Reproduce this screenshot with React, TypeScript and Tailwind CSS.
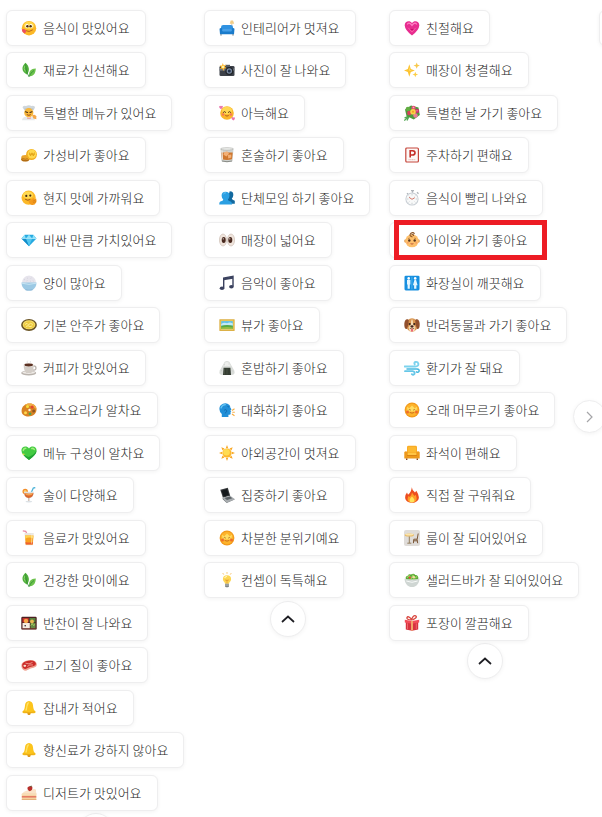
import React from 'react';

const icons: Record<string, React.ReactNode> = {
  yum: (
    <>
      <circle cx="8" cy="8.2" r="7.2" fill="#fcb827" />
      <ellipse cx="8" cy="5.5" rx="5.2" ry="3.8" fill="#ffd84c" />
      <ellipse cx="6" cy="6" rx="1.7" ry="2.1" fill="#fff" />
      <ellipse cx="10" cy="6" rx="1.7" ry="2.1" fill="#fff" />
      <circle cx="6.4" cy="6.2" r="1.2" fill="#4a2b12" />
      <circle cx="9.6" cy="6.2" r="1.2" fill="#4a2b12" />
      <path d="M5 10.800q3 2 6.500-.8" fill="none" stroke="#a8521b" strokeWidth=".8" strokeLinecap="round" />
      <path d="M.8 9.500q2-1.300 4 .7.600 3-1.500 3Q1.100 12.600.8 9.500z" fill="#ee4f5e" />
    </>
  ),
  herb: (
    <>
      <path d="M4.500.8C.3 4.500.2 9.600 5.900 12.600 9.300 8.400 8 3.700 4.500.8z" fill="#4fae3b" />
      <path d="M14.800 6.500c-4.600-.1-7.600 3-6.400 7.600 4.300.5 6.300-3 6.400-7.600z" fill="#6cc24c" />
      <path d="M4.600 2.500c.2 4.600 1.200 8.500 3.600 12.500M13 8.500c-2.200 1.500-3.700 3.300-4.700 6" fill="none" stroke="#2f8a33" strokeWidth=".8" />
      <path d="M3.800 3.800Q2.300 6.800 4.300 9.500" fill="none" stroke="#8ed66d" strokeWidth=".9" />
    </>
  ),
  chef: (
    <>
      <path d="M1.500 2.300Q2 .2 5 .9 8-.6 10.500.9q3.500-.6 3.500 1.700L12.500 5.500H3.500z" fill="#cfd6db" />
      <path d="M3.500 4h8.800" stroke="#aeb9c0" strokeWidth=".8" />
      <circle cx="7.800" cy="7.700" r="4.600" fill="#f8b83a" />
      <path d="M4.500 6.700l2 .8M11 6.700l-2 .8" stroke="#47301c" strokeWidth="1.100" strokeLinecap="round" />
      <path d="M5.800 9.600q2 1.500 4 0" fill="none" stroke="#8f3d18" strokeWidth=".9" />
      <path d="M1 15.300q.4-3.500 4-3.500l3 1.500 3-1.500q2.500.4 3 3.500z" fill="#e5e9eb" />
      <path d="M6.500 12.200l1.500.8 1.500-.8v1.600L8 13.200l-1.500.6z" fill="#e1584c" />
      <path d="M11 10.500q2.700-1.600 4.200.8l.2 3-3-.8z" fill="#f3a74a" />
    </>
  ),
  coins: (
    <>
      <ellipse cx="4.200" cy="12.300" rx="4.100" ry="2.300" fill="#c17b18" />
      <ellipse cx="4.400" cy="10.400" rx="4.100" ry="2.300" fill="#eaa52d" />
      <path d="M1 11.200q3.200 2 6.700 0M1 13q3.200 1.500 6.500.2" fill="none" stroke="#a35f10" strokeWidth=".6" />
      <ellipse cx="10.500" cy="7.500" rx="5.400" ry="5.600" fill="#f2ae20" />
      <ellipse cx="10.900" cy="7" rx="4.300" ry="4.500" fill="#ffd84d" />
      <path d="M8.300 5.500l1.200 3.500L11 5.800 12.300 9l1.200-3.500M8 7.200h6" fill="none" stroke="#dfa014" strokeWidth=".8" />
    </>
  ),
  handface: (
    <>
      <circle cx="7.600" cy="7.700" r="7.100" fill="#fcb928" />
      <ellipse cx="7" cy="5" rx="5" ry="3.600" fill="#ffda52" />
      <circle cx="5.300" cy="5.900" r="1.100" fill="#432a15" />
      <circle cx="9.300" cy="5.600" r="1.100" fill="#432a15" />
      <path d="M4.500 9.500q2.200 1.500 4.500.2" fill="none" stroke="#823c13" strokeWidth=".8" strokeLinecap="round" />
      <path d="M7.500 11.500l4.600-3.200q1.400-.4.900 1l2-.8q.8.300.2 1.200.8.500.1 1.300.6.800-.2 1.500-1.400 3-4.400 2.400-2.300-.4-3.200-3.400z" fill="#f49a1d" />
      <path d="M11.800 11.200l3-1.300M12.200 12.600l2.800-1.100" stroke="#cb7611" strokeWidth=".6" />
    </>
  ),
  gem: (
    <>
      <path d="M3.700 2.800h8.600L15.500 6.500 8 14.200.5 6.500z" fill="#26a9e0" />
      <path d="M3.700 2.800L.5 6.500h4.300zM8 2.800L4.800 6.500h6.400zM12.300 2.800l-1.100 3.700h4.300z" fill="#8be1fa" />
      <path d="M4.800 6.500L8 14.200l3.200-7.700z" fill="#52c6ef" />
      <path d="M.5 6.500L8 14.200 4.800 6.500z" fill="#138cc9" />
      <path d="M1 6.500h14" stroke="#d4f7ff" strokeWidth=".6" />
    </>
  ),
  rice: (
    <>
      <path d="M1 8Q1 1.500 8 .5 15 1.500 15 8z" fill="#e6e4ec" />
      <path d="M3 5l1-.8M6 3l1 .4M9.500 3.500l1-.7M12 5.500l.5 1M5.500 6l1-.5M9 6l1 .4" stroke="#d0cfd9" strokeWidth=".7" />
      <path d="M.5 7.500h15q0 5-4 7.500-3.500 1.100-7 0-4-2.500-4-7.500z" fill="#9cc9e4" />
      <path d="M.8 8.200q7.200 2.300 14.400 0" fill="none" stroke="#c7e4f2" strokeWidth="1" />
      <path d="M4.500 14q3.500 1.300 7 0v1.200q-3.500.8-7 0z" fill="#8bb7d6" />
    </>
  ),
  dish: (
    <>
      <ellipse cx="8" cy="8" rx="7.900" ry="6" fill="#6b5526" />
      <ellipse cx="8" cy="7.700" rx="6.300" ry="4.500" fill="#f8e16d" />
      <ellipse cx="8" cy="8" rx="5.500" ry="3.700" fill="#ecc940" />
      <path d="M4 7.500l2-1.200 1.500 1.500 2-1.500 2.500 1.200M5 9.500l2-.8 2 1 2.300-.8" fill="none" stroke="#fff19c" strokeWidth=".9" />
    </>
  ),
  coffee: (
    <>
      <ellipse cx="7.700" cy="13" rx="7.500" ry="2.400" fill="#b9b3ad" />
      <ellipse cx="7.700" cy="12.500" rx="6.300" ry="1.500" fill="#eeeae6" />
      <circle cx="12.800" cy="8" r="2.200" fill="none" stroke="#b7b0aa" strokeWidth="1.200" />
      <path d="M2.700 4.800h10q0 6-2.500 8.200H5.200q-2.500-2.200-2.500-8.200z" fill="#d3cdc7" />
      <ellipse cx="7.700" cy="4.900" rx="5" ry="1.800" fill="#f1ece8" />
      <ellipse cx="7.700" cy="5" rx="4.300" ry="1.400" fill="#5b3021" />
      <path d="M6.500 3q-1-1 .3-2.300M9.500 3q-1-1 .3-2" fill="none" stroke="#d8d8d8" strokeWidth=".7" />
    </>
  ),
  palette: (
    <>
      <path d="M8.500 1.500c4.500 0 7.200 2.700 7 6.200-.2 4.200-3.800 6.700-8 6.700C3 14.400.3 12 .6 8.400.8 7 .9 5 3.400 3.300 4.500 2 6.500 1.500 8.500 1.500z" fill="#d98323" />
      <path d="M8.500 1.500c4.500 0 7.200 2.700 7 6.200C13.500 4.500 8.500 3.500 3.400 3.300 4.500 2 6.500 1.500 8.500 1.500z" fill="#f0ae45" />
      <circle cx="6.500" cy="4.500" r="1.500" fill="#f8df3c" />
      <circle cx="11.200" cy="4.900" r="1.500" fill="#e4452f" />
      <circle cx="12.700" cy="9" r="1.500" fill="#8f5522" />
      <circle cx="9" cy="11.800" r="1.400" fill="#4ca54e" />
      <circle cx="4.500" cy="10.800" r="1.500" fill="#ffd84c" />
      <circle cx="8.500" cy="8" r="1.200" fill="#fff6df" />
    </>
  ),
  greenheart: (
    <>
      <path d="M8 15Q.4 9.800.4 5.300C.4 1.500 5.500-.1 8 3.500c2.500-3.600 7.600-2 7.600 1.800C15.600 9.800 8 15 8 15z" fill="#43cb42" />
      <path d="M8 15Q3.500 12 1.500 8.500q3 2.500 6.100 3.500Q13 10 15.500 5.500 15.800 9.500 8 15z" fill="#22a435" />
      <path d="M2.300 5.500q.2-2.300 2.500-2.300M10.800 3.500q1.800-.5 2.500 1" fill="none" stroke="#a1ee7d" strokeWidth="1.500" strokeLinecap="round" />
      <path d="M1.500 8.500l3 .5-2.500 1.200z" fill="#e7d744" />
    </>
  ),
  cocktail: (
    <>
      <path d="M9.800 6.500L12.300 1l2-.5" fill="none" stroke="#4db3d8" strokeWidth="1.300" />
      <circle cx="4.200" cy="4.500" r="2.700" fill="#f28d28" />
      <circle cx="4.200" cy="4.500" r="1.500" fill="#ffcc65" />
      <path d="M3 4.800q-.5 5.800 4.800 6.700 5.300-.8 5-6.700z" fill="#dfe0dc" />
      <path d="M3.300 6q0 4.300 4.400 5Q12.200 10.300 12.500 6q-4 1.500-9.200 0z" fill="#d9652d" />
      <path d="M4 6q3.500 1.500 8 0-.7 2.500-4.200 2.500T4 6z" fill="#f6a24d" />
      <path d="M7.800 11v3" stroke="#ceb7a7" strokeWidth="1.300" />
      <ellipse cx="7.900" cy="14.600" rx="3.300" ry=".9" fill="#dce2e6" />
    </>
  ),
  juice: (
    <>
      <path d="M7.500 7L4.700 1.300 1.800.9" fill="none" stroke="#e78ba6" strokeWidth="1.300" />
      <path d="M3.500 3h9.200l-.8 12.200H4.600z" fill="#e9e5df" />
      <path d="M4 5.500h8.400l-.6 8.900H4.700z" fill="#f9a01f" />
      <path d="M4 5.500h8.400l-.2 3Q8 6.500 4.200 8.800z" fill="#ffd150" />
      <path d="M4.500 12q3.500 1.200 7.400 0l-.2 2.600H4.800z" fill="#ee6030" />
      <path d="M11 3.500l-.5 10" stroke="#fff" strokeOpacity=".6" strokeWidth=".8" />
    </>
  ),
  bento: (
    <>
      <rect x=".3" y="1.800" width="15.400" height="12.800" rx="1.200" fill="#4c2020" />
      <rect x="1.500" y="3" width="6.200" height="4.300" fill="#c6312d" />
      <rect x="8.500" y="3" width="6" height="4.300" fill="#57813d" />
      <path d="M1.500 8h7.300v5.400H1.500z" fill="#f6eee4" />
      <path d="M9.500 8h5v5.400h-5z" fill="#688a45" />
      <circle cx="5" cy="6" r="2.200" fill="#f6a84a" />
      <circle cx="11" cy="6.500" r="1.900" fill="#eaba55" />
      <circle cx="4.200" cy="10.800" r=".8" fill="#292124" />
      <path d="M9.800 10.500l1.500-1.800 1.200 1.800 1.500-1" fill="none" stroke="#a6cf62" strokeWidth="1" />
      <path d="M1 13.800h14" stroke="#7f392e" strokeWidth=".8" />
    </>
  ),
  meat: (
    <>
      <path d="M.4 9.400Q-.2 5.700 5 3.800q5.700-2 9.400.6 2.500 2.700.7 5-2 1.500-5.500 2.200l-4.600 2.100Q1 13.300.4 9.400z" fill="#f0a493" />
      <path d="M1.200 8.200Q1 5.600 5.200 4.200q5.500-1.800 8.800.6 1.800 2.200.4 3.500-2 1.200-5.400 1.700l-4.500 2Q1.300 11.800 1.200 8.200z" fill="#cc2d2a" />
      <path d="M4.500 6.200q3.500 1.800 7-.8M6.300 9.400q2-2 5.700-1.500" fill="none" stroke="#f4afa2" strokeWidth=".8" />
      <ellipse cx="3.800" cy="8.800" rx="1.400" ry="1.100" fill="#f6e1d1" />
    </>
  ),
  bell: (
    <>
      <circle cx="8" cy="13.400" r="1.600" fill="#d98f12" />
      <path d="M8 .9q3.600.3 4 4.300.2 4.800 2.400 6.100.6 1.800-1.200 2H2.800q-1.800-.2-1.200-2Q3.800 10 4 5.200 4.400 1.200 8 .9z" fill="#fcc41c" />
      <path d="M5.800 3.500Q7 2 8.300 2.300 6.500 5 5.800 10.500H4.200q1.300-3.500 1.600-7z" fill="#ffe267" />
      <path d="M1.800 11.900q6.200 1.500 12.400 0" fill="none" stroke="#e9a915" strokeWidth=".9" />
    </>
  ),
  cake: (
    <>
      <path d="M.8 9Q8 4.200 14.500 4.500l.8 4.500v5.800H.8z" fill="#f5d19d" />
      <path d="M.8 8.500Q7 4 14 4.300q1.300 1.200 1.300 4.400z" fill="#fbe3c8" />
      <path d="M.8 8.500h14.500v1.700H.8z" fill="#f7dcb8" />
      <path d="M.8 11.300h14.500v1.100H.8z" fill="#df594e" />
      <path d="M.8 14h14.500v1H.8z" fill="#e5b27c" />
      <path d="M6.500 2.600Q8.500.2 11.300 1.800q.7 3.500-2.600 4.500-2.600-1-2.200-3.700z" fill="#b92f2b" />
      <path d="M8 1.700L10.500.6l.3 1.500z" fill="#6c5030" />
    </>
  ),
  couch: (
    <>
      <path d="M12.800 3v7" stroke="#c5ab8a" strokeWidth=".7" />
      <path d="M11.700.5H14l1.200 3.300h-4.500z" fill="#f2cc86" />
      <path d="M2 7.200Q2 5 4.300 5h7.400Q14 5 14 7.200V11H2z" fill="#2f92e2" />
      <path d="M.5 8.700q1.700-1.500 2.900.5v1.600h9.200V9.200q1.200-2 2.900-.5l-.5 5.600H1z" fill="#1a7bcb" />
      <rect x="3.200" y="9" width="9.600" height="2.400" rx=".9" fill="#479fe8" />
      <path d="M2 14.300v1.200M14 14.300v1.200" stroke="#4b5560" strokeWidth="1" />
    </>
  ),
  camera: (
    <>
      <rect x=".5" y="4" width="15" height="10" rx="1.300" fill="#3c4048" />
      <path d="M.5 6.500h15v2.200H.5z" fill="#70757d" />
      <rect x="6.500" y="2.800" width="4.500" height="2.500" fill="#565b63" />
      <circle cx="10.300" cy="9" r="4" fill="#202429" />
      <circle cx="10.300" cy="9" r="2.700" fill="#7c8ca3" />
      <circle cx="10.300" cy="9" r="1.500" fill="#202f47" />
      <path d="M3.800 1l1 2.400 2.400-.8-1.400 2.200 1.900 1.400-2.400.2L4.600 9 3.300 6.600.9 7.200l1.300-2L.6 3.500l2.400-.1z" fill="#ffb629" />
      <circle cx="4" cy="5" r="1.300" fill="#fff3a3" />
    </>
  ),
  loveface: (
    <>
      <circle cx="8" cy="8" r="6.800" fill="#fbb62b" />
      <ellipse cx="8" cy="5.500" rx="5" ry="3.800" fill="#ffd852" />
      <path d="M4.300 7.300q1.200-1.700 2.400 0M9.300 7.300q1.200-1.700 2.400 0" fill="none" stroke="#5d3719" strokeWidth="1" strokeLinecap="round" />
      <path d="M6.300 10.500q1.700 1.200 3.400 0" fill="none" stroke="#9a461c" strokeWidth=".8" />
      <circle cx="4.100" cy="9.500" r="1.300" fill="#f6785b" />
      <circle cx="11.900" cy="9.500" r="1.300" fill="#f6785b" />
      <path d="M2 4.200Q-.4 2.700.3 1.300 1.200.1 2 1.200q1.200-1 1.800.1.500 1.500-1.800 2.900zM14.300 15.500q-2.300-1.500-1.800-2.900 1-1 1.800 0 1.200-.8 1.600.2.300 1.400-1.600 2.700z" fill="#e976ad" />
    </>
  ),
  whisky: (
    <>
      <path d="M1.500 1.500h13l-1 12.800q-5.500 1.700-11 0z" fill="#cfd2cf" />
      <path d="M2.300 5.500h11.400l-.7 6.800q-5 1.300-10 0z" fill="#cf772e" />
      <path d="M5.200 5.200l3-1 1.800 2.500-2.500 2.800-3-1.800zM9 8l3.200-.5.200 3-3.200 1z" fill="#f3b076" />
      <ellipse cx="8" cy="1.900" rx="6.400" ry="1.200" fill="#eef0ed" stroke="#a9aaa6" strokeWidth=".6" />
      <path d="M3 3.500l.5 9" stroke="#f7f3ec" strokeWidth=".9" />
      <path d="M3 14q5 1.400 10 0" fill="none" stroke="#898b86" strokeWidth="1" />
    </>
  ),
  people: (
    <>
      <path d="M10.700 1.200q4.100.2 3.600 4.100-.2 2.200-1.500 3.200.2 1.400 3 2.300v3H7z" fill="#12699f" />
      <path d="M6.500 1.800q4.200 0 4 4-.1 2.500-1.700 3.700 0 1.300 3.300 2.200 1 .8 1 2.900H.2q0-2.300 1.100-3 3-.8 3-2.100Q2.700 8.300 2.600 5.800q0-4 3.900-4z" fill="#2b9fe2" />
      <path d="M4.500 4q.8-1.300 2.300-1.200" fill="none" stroke="#78cdf8" strokeWidth="1" />
    </>
  ),
  eyes: (
    <>
      <ellipse cx="4" cy="8" rx="3.600" ry="6" fill="#efe4dc" stroke="#c8b7ac" strokeWidth=".6" />
      <ellipse cx="12" cy="8" rx="3.600" ry="6" fill="#efe4dc" stroke="#c8b7ac" strokeWidth=".6" />
      <ellipse cx="4.700" cy="8" rx="2" ry="3" fill="#49291f" />
      <ellipse cx="11.300" cy="8" rx="2" ry="3" fill="#49291f" />
      <circle cx="4.200" cy="6.800" r=".6" fill="#fff" />
      <circle cx="10.800" cy="6.800" r=".6" fill="#fff" />
    </>
  ),
  music: (
    <>
      <path d="M4.700 13V3l9.300-1.700v10.200" fill="none" stroke="#3b425f" strokeWidth="1.400" />
      <path d="M4.700 3.200L14 1.500v2.200L4.700 5.300z" fill="#3b425f" />
      <ellipse cx="3" cy="13.200" rx="2.300" ry="1.800" fill="#3b425f" />
      <ellipse cx="12.400" cy="11.800" rx="2.300" ry="1.800" fill="#3b425f" />
    </>
  ),
  frame: (
    <>
      <rect x=".4" y="2.300" width="15.200" height="11.600" fill="#d9a934" />
      <rect x="1.500" y="3.400" width="13" height="9.400" fill="#f1d46d" />
      <rect x="2.200" y="4.100" width="11.600" height="8" fill="#5fc0e9" />
      <path d="M2.200 7q3-2.200 6-.7 2.500-1.500 5.600.2v2H2.200z" fill="#c3e9f5" />
      <path d="M2.200 9q5.300-2 11.600-.2v3.300H2.200z" fill="#58a943" />
      <path d="M2.200 10.500q6-.8 11.600 0v1.600H2.200z" fill="#98bf44" />
    </>
  ),
  onigiri: (
    <>
      <path d="M5.700 1.700Q8 .3 10.300 1.700l4.800 8.600q1.700 4.500-2.500 4.600H3.400Q-.8 14.800.9 10.300z" fill="#d9dcd9" />
      <path d="M6 2.700Q8 1.500 9.800 2.700l2 3.500q-4.500-1-7.700.2z" fill="#eeefed" />
      <path d="M4.600 7.800h6.800l.6 7.100H4z" fill="#343c32" />
      <path d="M5.500 8.500v6M8 8.500v6" stroke="#566151" strokeWidth=".5" />
      <path d="M2 11l1-.5M13 10.500l1 1M5 5l1-.4M9.500 4l.8.6" stroke="#bdc2bd" strokeWidth=".7" />
    </>
  ),
  speak: (
    <>
      <path d="M10.400 3Q7.800.4 4 1.700.3 3.300.4 7q0 3 2.400 5v3h6.600v-2.200q2.400.3 2.300-1.400l-.2-1.500.8-.7-1-.8 1.200-1-1.300-2.100Q11.500 4.200 10.400 3z" fill="#218fd8" />
      <path d="M2 6Q3 3 6.300 2.700" fill="none" stroke="#65c5f4" strokeWidth="1.300" strokeLinecap="round" />
      <path d="M5.200 8.200q2.600-1.500 2.500 1.500l-1.800 1.700M8.500 4.500l1.500.5" fill="none" stroke="#1368a9" strokeWidth=".9" />
      <path d="M13 8.500l2.500-1.700M13.300 10.300h2.500M13 12l2.500 1.800" stroke="#f6ad45" strokeWidth="1.100" />
    </>
  ),
  sun: (
    <>
      <path d="M8 0l1.200 3.200H6.800zM8 16l1.200-3.200H6.800zM0 8l3.200-1.200v2.400zM16 8l-3.200-1.200v2.400zM2.300 2.300l3.200 1.300-1.900 1.900zM13.700 2.300l-1.300 3.200-1.900-1.900zM2.300 13.700l1.300-3.200 1.900 1.900zM13.700 13.700l-3.200-1.300 1.900-1.900z" fill="#f8a623" />
      <circle cx="8" cy="8" r="4.600" fill="#fcb82e" />
      <circle cx="7.500" cy="7.200" r="3.300" fill="#ffdc53" />
    </>
  ),
  laptop: (
    <>
      <path d="M1.300 2.800L8.800.7l2.400 8.100-7.300 2z" fill="#36393c" />
      <path d="M2.500 3.700l5.600-1.600 1.800 6-5.300 1.500z" fill="#15191c" />
      <path d="M3.800 10.700l7.400-2 4.500 3.300-8 3.200z" fill="#a6abae" />
      <path d="M5.500 11l5.300-1.500 2.500 1.700-5.300 1.700z" fill="#5a6064" />
      <path d="M3.800 10.700l3.900 4.500v.7l-4.200-4zM7.700 15.200l8-3.200v.6l-8 3.300z" fill="#70767a" />
    </>
  ),
  calm: (
    <>
      <circle cx="8" cy="8" r="7.400" fill="#f29a1b" />
      <circle cx="8" cy="8" r="6.200" fill="#fdb32b" />
      <path d="M3 4.800l2.300 1.400L8 3.500l2.700 2.700L13 4.800l-.6 4.700H3.600z" fill="#ffdc62" />
      <path d="M4.800 7.900q.9-1.200 1.800 0M9.400 7.900q.9-1.200 1.800 0" fill="none" stroke="#a8661a" strokeWidth=".8" strokeLinecap="round" />
      <path d="M6 10.600q2 1.300 4 0" fill="none" stroke="#bf5f18" strokeWidth=".8" strokeLinecap="round" />
      <circle cx="3.500" cy="10" r="1.500" fill="#ef6c2b" />
      <circle cx="12.500" cy="10" r="1.500" fill="#ef6c2b" />
    </>
  ),
  bulb: (
    <>
      <path d="M8 3.200q4.200.2 4.100 4-.1 2-1.600 3.100l-.5 1.400H6l-.5-1.400Q4 9.200 3.900 7.200q0-3.800 4.100-4z" fill="#fdd653" />
      <path d="M5.700 6q.6-1.600 2.300-1.500" fill="none" stroke="#fff7bf" strokeWidth="1.200" />
      <path d="M6.300 7.500l1 1.500.7-1.300L8.700 9l1-1.500M8 9v2.500" fill="none" stroke="#df932e" strokeWidth=".7" />
      <path d="M6 11.700h4v2.700q-2 1.900-4 0z" fill="#7e8587" />
      <path d="M6 13h4" stroke="#c6c9c8" strokeWidth=".8" />
      <path d="M8 .2v1.500M3.800 1.200l.9 1.300M12.200 1.200l-.9 1.300" stroke="#f4b54c" strokeWidth=".9" />
    </>
  ),
  pinkheart: (
    <>
      <path d="M8 15.500Q1 10.200.7 5.500C.5 1.500 5.700-.3 8 3.300c2.300-3.600 7.500-1.800 7.300 2.200Q15 10.200 8 15.500z" fill="#e72d8f" />
      <path d="M3.300 4.500Q4.500 2 7 4.200L8 5.500l1-1.300q2.500-2.200 3.700.3" fill="none" stroke="#ff7fc4" strokeWidth="1.300" />
      <path d="M3.300 7.200l1.700 1h6l1.700-1L8 12.400z" fill="#ff61ad" />
      <path d="M5.300 8.500L8 11l2.700-2.500z" fill="#c70d6c" />
    </>
  ),
  sparkles: (
    <>
      <path d="M5.300 2.300l1.500 4.600 4 1.600-4 1.600-1.500 4.600-1.500-4.600L0 8.500l3.800-1.600z" fill="#fcc434" />
      <path d="M12.700.4l.9 2.300 2.300.9-2.300.9-.9 2.300-.9-2.300-2.300-.9 2.300-.9z" fill="#f8c94d" />
      <path d="M11.300 9.700l.8 2 2 .8-2 .8-.8 2-.8-2-2-.8 2-.8z" fill="#fbce48" />
      <path d="M5.200 5l.6 2.700 2 .7H5.200z" fill="#ffed91" />
    </>
  ),
  bouquet: (
    <>
      <path d="M8 8L.3 15.600M7 7.500L3 15.500M7.500 9.500L.5 13" stroke="#54a856" strokeWidth="1.300" />
      <path d="M1 4.500L7 .5l7.500 2 1.300 7.500-6 4.500L2.500 11z" fill="#4d9a3e" />
      <circle cx="4" cy="4" r="2.300" fill="#62ad42" />
      <circle cx="9.500" cy="3" r="2.200" fill="#e34f74" />
      <circle cx="13" cy="6" r="2.200" fill="#c9346b" />
      <circle cx="5.300" cy="8" r="2.200" fill="#d8415b" />
      <circle cx="11.500" cy="10.500" r="2.200" fill="#ea7d98" />
      <circle cx="9" cy="6.800" r="2.800" fill="#fad046" />
      <circle cx="9" cy="6.800" r="1" fill="#f39b25" />
      <circle cx="9.500" cy="2.500" r=".8" fill="#ffabc0" />
      <circle cx="13" cy="5.800" r=".7" fill="#f88ca9" />
    </>
  ),
  parking: (
    <>
      <rect x="1.800" y="1" width="12.600" height="14" rx="1" fill="#fdf8f6" stroke="#c5473d" strokeWidth="1.200" />
      <path d="M6.200 10.500V3.800h2.400q2.500.2 2.400 2.100-.1 2-2.400 2.100H6.200" fill="none" stroke="#c52e27" strokeWidth="1.600" />
      <path d="M4.500 12.700h7" stroke="#dea19a" strokeWidth=".8" strokeDasharray="1.200 .5" />
    </>
  ),
  clock: (
    <>
      <path d="M7 .6h3M8.500.8v2M13 2.300l1.500 1.500M3 3.200l1 1" stroke="#aeb3b9" strokeWidth="1.300" />
      <circle cx="8" cy="9" r="6.600" fill="#c8ced4" />
      <circle cx="8" cy="9" r="5.600" fill="#f8f9f9" />
      <path d="M8 4.300v1M8 12.800v1M3.300 9h1M11.800 9h1M4.700 5.700l.6.6M11.300 5.700l-.6.6M4.700 12.300l.6-.6M11.300 12.300l-.6-.6" stroke="#9ba2a8" strokeWidth=".6" />
      <path d="M5 7.300l3 2 2.800-1.600" fill="none" stroke="#cc6556" strokeWidth=".9" />
    </>
  ),
  baby: (
    <>
      <circle cx="1.800" cy="9" r="1.700" fill="#e5a15a" />
      <circle cx="14.200" cy="9" r="1.700" fill="#e5a15a" />
      <ellipse cx="8" cy="8.800" rx="6.700" ry="6.500" fill="#fdbf6c" />
      <path d="M8.500 5Q4.500 3.800 7 1.200 9.400-.3 10.400 2M7.500 3q2-1.300 2 1" fill="none" stroke="#8b5425" strokeWidth="1.100" />
      <circle cx="5.300" cy="8.500" r="1.200" fill="#53341e" />
      <circle cx="10.700" cy="8.500" r="1.200" fill="#53341e" />
      <path d="M4.200 6.500l1.500-.4M10.300 6.100l1.500.4" stroke="#946030" strokeWidth=".7" />
      <path d="M6 11.500q2 1.800 4 0z" fill="#b34a30" />
      <circle cx="3.800" cy="10.800" r="1" fill="#f7a064" />
      <circle cx="12.200" cy="10.800" r="1" fill="#f7a064" />
    </>
  ),
  restroom: (
    <>
      <rect x=".5" y=".8" width="15" height="14.600" rx="1.300" fill="#168fe0" />
      <circle cx="4.700" cy="3.400" r="1.300" fill="#fff" />
      <circle cx="11.200" cy="3.400" r="1.300" fill="#fff" />
      <path d="M3 5h3.400v4.500h-.6v4.300H3.600V9.500H3zM10.400 5h1.700l1.500 5.200h-1.200v3.600h-2.300v-3.600H8.900z" fill="#e4f6ff" />
      <path d="M7.900 1.800v12.500" stroke="#72caf5" strokeWidth=".6" />
    </>
  ),
  dog: (
    <>
      <ellipse cx="8" cy="8" rx="5.900" ry="6.700" fill="#d99550" />
      <path d="M3.800 2.300Q.8 1.500.3 6.800q-.2 5.500 2.500 5.200Q5 8 4.800 3zM12.200 2.300q3-.8 3.500 4.500.2 5.500-2.500 5.200-2.200-4-2-9z" fill="#92502c" />
      <path d="M8 1.800q1.200 2 1 5.200l2.500 3.500-1.200 3.700H5.700L4.500 10.500 7 7q-.2-3.200 1-5.200z" fill="#f7dfb8" />
      <circle cx="5.700" cy="7" r="1.100" fill="#3c241a" />
      <circle cx="10.300" cy="7" r="1.100" fill="#3c241a" />
      <ellipse cx="8" cy="9.300" rx="1.700" ry="1.100" fill="#40231d" />
      <path d="M5.800 11.300q1.800 1 2.200-1 .4 2 2.200 1" fill="none" stroke="#673621" strokeWidth=".7" />
      <path d="M7 12h2v2q-1 1.300-2 0z" fill="#ec6579" />
    </>
  ),
  wind: (
    <>
      <path d="M.5 6.500h10.800q3.500-.2 3-2.900-.6-2.100-2.800-1.600-1.700.7-.8 2.200" fill="none" stroke="#7dd3ee" strokeWidth="1.900" strokeLinecap="round" />
      <path d="M3 8.900h10q2.700.3 2 2.500-1 1.500-2.500.5" fill="none" stroke="#48b9e0" strokeWidth="1.500" strokeLinecap="round" />
      <path d="M1 11.200h7.500q2.800.5 2 2.700-1.200 1.600-2.700.2" fill="none" stroke="#66c7e8" strokeWidth="1.800" strokeLinecap="round" />
    </>
  ),
  armchair: (
    <>
      <path d="M3 8V2.200Q3 .8 4.500.8h7Q13 .8 13 2.200V8z" fill="#f9ac25" />
      <path d="M4 7V3q0-1.100 1.100-1.100h5.800Q12 1.900 12 3v4z" fill="#fdb931" />
      <path d="M3 7.800h10V11H3z" fill="#ffc545" />
      <path d="M.3 7q1.800-1.800 3.400.3V10h8.600V7.300Q13.900 5.200 15.700 7v6.500H.3z" fill="#ed981a" />
      <path d="M3 10.500h10" stroke="#d07a10" strokeWidth=".7" />
      <path d="M2.700 13.500V15M13.300 13.500V15" stroke="#87471c" strokeWidth="1.400" />
    </>
  ),
  fire: (
    <>
      <path d="M7.800.3Q8 3.300 11 5.500l1.300-1.800q3.800 5.500 2 9-2 3.100-6.300 3.100-4.700 0-6.400-3.300Q.2 9 3 5.500l1 2.300Q7.500 5 7.800.3z" fill="#ed4d20" />
      <path d="M8 5.500q1 2 2.500 3.400l1.200-1.200q2 4.800-.2 6.700-3.500 1.700-7 0-2-2.200.3-5.700l.9 1.300Q7.500 8.500 8 5.500z" fill="#ff9c28" />
      <path d="M8 9.500q3.800 3.800 1.700 5.600-1.700.6-3.500 0Q4.500 12.800 8 9.500z" fill="#ffe35b" />
    </>
  ),
  room: (
    <>
      <rect x="0" y="0" width="16" height="16" rx="2" fill="#dfdcd9" />
      <ellipse cx="5.300" cy="5" rx="4.600" ry="1.500" fill="#e8b961" />
      <ellipse cx="5.300" cy="4.600" rx="4" ry="1" fill="#fae5b0" />
      <path d="M5.300 6.500V13M3.300 13.200h4" stroke="#8a7350" strokeWidth=".9" />
      <path d="M14.200 3.500l-1 5.700H9.800l-.4 4M13 9.200l.7 4M9.700 10.800h3.500" fill="none" stroke="#7b5636" strokeWidth="1" />
    </>
  ),
  salad: (
    <>
      <path d="M2 7.500Q.8 4.500 3.700 3.700 4.500 1.400 7 2.500q2.500-1.700 4.300.4 3.500-.2 3 4.600z" fill="#5baa38" />
      <path d="M3 6l2-2.500 2.200 3L9 3.200 11 6l2.200-1.500" fill="none" stroke="#98d160" strokeWidth="1.200" />
      <circle cx="5.800" cy="5.600" r="1.200" fill="#e4493a" />
      <circle cx="9.700" cy="5.300" r="1.300" fill="#f4dda0" />
      <path d="M.5 6.500Q8 10 15.500 6.500q-.2 5.800-4.600 8-2.900 1-5.800 0Q.7 12.300.5 6.500z" fill="#cfd6d3" />
      <path d="M2.300 9q5.700 2.600 11.300 0" fill="none" stroke="#f7f9f8" strokeWidth="1" />
    </>
  ),
  gift: (
    <>
      <path d="M1.800 6.500h12.400v8L8 15.700l-6.200-1.200z" fill="#d8323f" />
      <path d="M.8 4.700L8 6l7.200-1.300v2.700L8 8.700.8 7.400z" fill="#f34d59" />
      <path d="M7 5.800h2v9.800H7z" fill="#f0a467" />
      <path d="M7.500 4.800Q2.300 4.800 3 2.500 4 .4 7.700 4.300q2-4.800 4.200-3.300 1.700 1.700-3.400 3.800" fill="none" stroke="#d9473f" strokeWidth="1.300" />
      <path d="M3.500 8.300v5.700M12.300 8.300v5.700" stroke="#f77d80" strokeWidth=".7" />
    </>
  ),
};

type Keyword = { icon: string; text: string; marked?: boolean };

const foodKeywords: Keyword[] = [
  { icon: 'yum', text: '음식이 맛있어요' },
  { icon: 'herb', text: '재료가 신선해요' },
  { icon: 'chef', text: '특별한 메뉴가 있어요' },
  { icon: 'coins', text: '가성비가 좋아요' },
  { icon: 'handface', text: '현지 맛에 가까워요' },
  { icon: 'gem', text: '비싼 만큼 가치있어요' },
  { icon: 'rice', text: '양이 많아요' },
  { icon: 'dish', text: '기본 안주가 좋아요' },
  { icon: 'coffee', text: '커피가 맛있어요' },
  { icon: 'palette', text: '코스요리가 알차요' },
  { icon: 'greenheart', text: '메뉴 구성이 알차요' },
  { icon: 'cocktail', text: '술이 다양해요' },
  { icon: 'juice', text: '음료가 맛있어요' },
  { icon: 'herb', text: '건강한 맛이에요' },
  { icon: 'bento', text: '반찬이 잘 나와요' },
  { icon: 'meat', text: '고기 질이 좋아요' },
  { icon: 'bell', text: '잡내가 적어요' },
  { icon: 'bell', text: '향신료가 강하지 않아요' },
  { icon: 'cake', text: '디저트가 맛있어요' },
];

const moodKeywords: Keyword[] = [
  { icon: 'couch', text: '인테리어가 멋져요' },
  { icon: 'camera', text: '사진이 잘 나와요' },
  { icon: 'loveface', text: '아늑해요' },
  { icon: 'whisky', text: '혼술하기 좋아요' },
  { icon: 'people', text: '단체모임 하기 좋아요' },
  { icon: 'eyes', text: '매장이 넓어요' },
  { icon: 'music', text: '음악이 좋아요' },
  { icon: 'frame', text: '뷰가 좋아요' },
  { icon: 'onigiri', text: '혼밥하기 좋아요' },
  { icon: 'speak', text: '대화하기 좋아요' },
  { icon: 'sun', text: '야외공간이 멋져요' },
  { icon: 'laptop', text: '집중하기 좋아요' },
  { icon: 'calm', text: '차분한 분위기예요' },
  { icon: 'bulb', text: '컨셉이 독특해요' },
];

const serviceKeywords: Keyword[] = [
  { icon: 'pinkheart', text: '친절해요' },
  { icon: 'sparkles', text: '매장이 청결해요' },
  { icon: 'bouquet', text: '특별한 날 가기 좋아요' },
  { icon: 'parking', text: '주차하기 편해요' },
  { icon: 'clock', text: '음식이 빨리 나와요' },
  { icon: 'baby', text: '아이와 가기 좋아요', marked: true },
  { icon: 'restroom', text: '화장실이 깨끗해요' },
  { icon: 'dog', text: '반려동물과 가기 좋아요' },
  { icon: 'wind', text: '환기가 잘 돼요' },
  { icon: 'calm', text: '오래 머무르기 좋아요' },
  { icon: 'armchair', text: '좌석이 편해요' },
  { icon: 'fire', text: '직접 잘 구워줘요' },
  { icon: 'room', text: '룸이 잘 되어있어요' },
  { icon: 'salad', text: '샐러드바가 잘 되어있어요' },
  { icon: 'gift', text: '포장이 깔끔해요' },
];

const KeywordChip = ({ icon, text, marked }: Keyword) => (
  <li className="relative flex h-9 items-center gap-1.5 whitespace-nowrap rounded-md border border-[#eeeeef] bg-white pl-3.5 pr-[15px] shadow-[0_1px_4px_rgba(0,0,0,0.05)] odd:mb-1.5 even:mb-[7px]">
    <svg viewBox="0 0 16 16" className="size-4 shrink-0" aria-hidden="true">
      {icons[icon]}
    </svg>
    <span>{text}</span>
    {marked && (
      <span className="pointer-events-none absolute -inset-y-[3px] -right-[5px] left-1 border-[5px] border-[#ed1c24]" />
    )}
  </li>
);

const KeywordColumn = ({ label, items }: { label: string; items: Keyword[] }) => (
  <section aria-label={label} className="flex flex-col items-center">
    <ul className="flex w-full flex-col items-start">
      {items.map((item) => (
        <KeywordChip key={item.text} {...item} />
      ))}
    </ul>
    <button
      type="button"
      aria-label="접기"
      className="-mt-1 flex size-9 shrink-0 items-center justify-center rounded-full border border-[#eeeeef] bg-white shadow-[0_1px_4px_rgba(0,0,0,0.05)]">
      <svg viewBox="0 0 14 8" className="h-2 w-3.5" aria-hidden="true">
        <path d="M1 7l6-5.500L13 7" fill="none" stroke="#1e1e23" strokeWidth="1.700" />
      </svg>
    </button>
  </section>
);

const App = () => {
  return (
    <main className="relative h-screen overflow-hidden bg-white font-['Noto_Sans_CJK_KR',sans-serif] text-[13px] font-light leading-5 text-[#262626]">
      <div className="grid grid-cols-[180fr_167fr_192fr_3px] gap-x-[18px] pl-1.5 pt-2.5">
        <KeywordColumn label="음식/가격" items={foodKeywords} />
        <KeywordColumn label="분위기" items={moodKeywords} />
        <KeywordColumn label="편의시설/기타" items={serviceKeywords} />
        {/* Edge of the next column */}
        <div className="h-9 w-9 rounded-md border border-[#eeeeef] bg-white shadow-[0_1px_4px_rgba(0,0,0,0.05)]" />
      </div>

      <button
        type="button"
        aria-label="다음"
        className="absolute -right-1 top-[400px] flex size-[33px] items-center justify-center rounded-full border border-[#eeeeef] bg-white shadow-[0_1px_4px_rgba(0,0,0,0.05)]">
        <svg viewBox="0 0 7 12" className="h-3 w-[7px]" aria-hidden="true">
          <path d="M1 1l5 5-5 5" fill="none" stroke="#a5a5a8" strokeWidth="1.200" />
        </svg>
      </button>
    </main>
  );
};

export default App;
